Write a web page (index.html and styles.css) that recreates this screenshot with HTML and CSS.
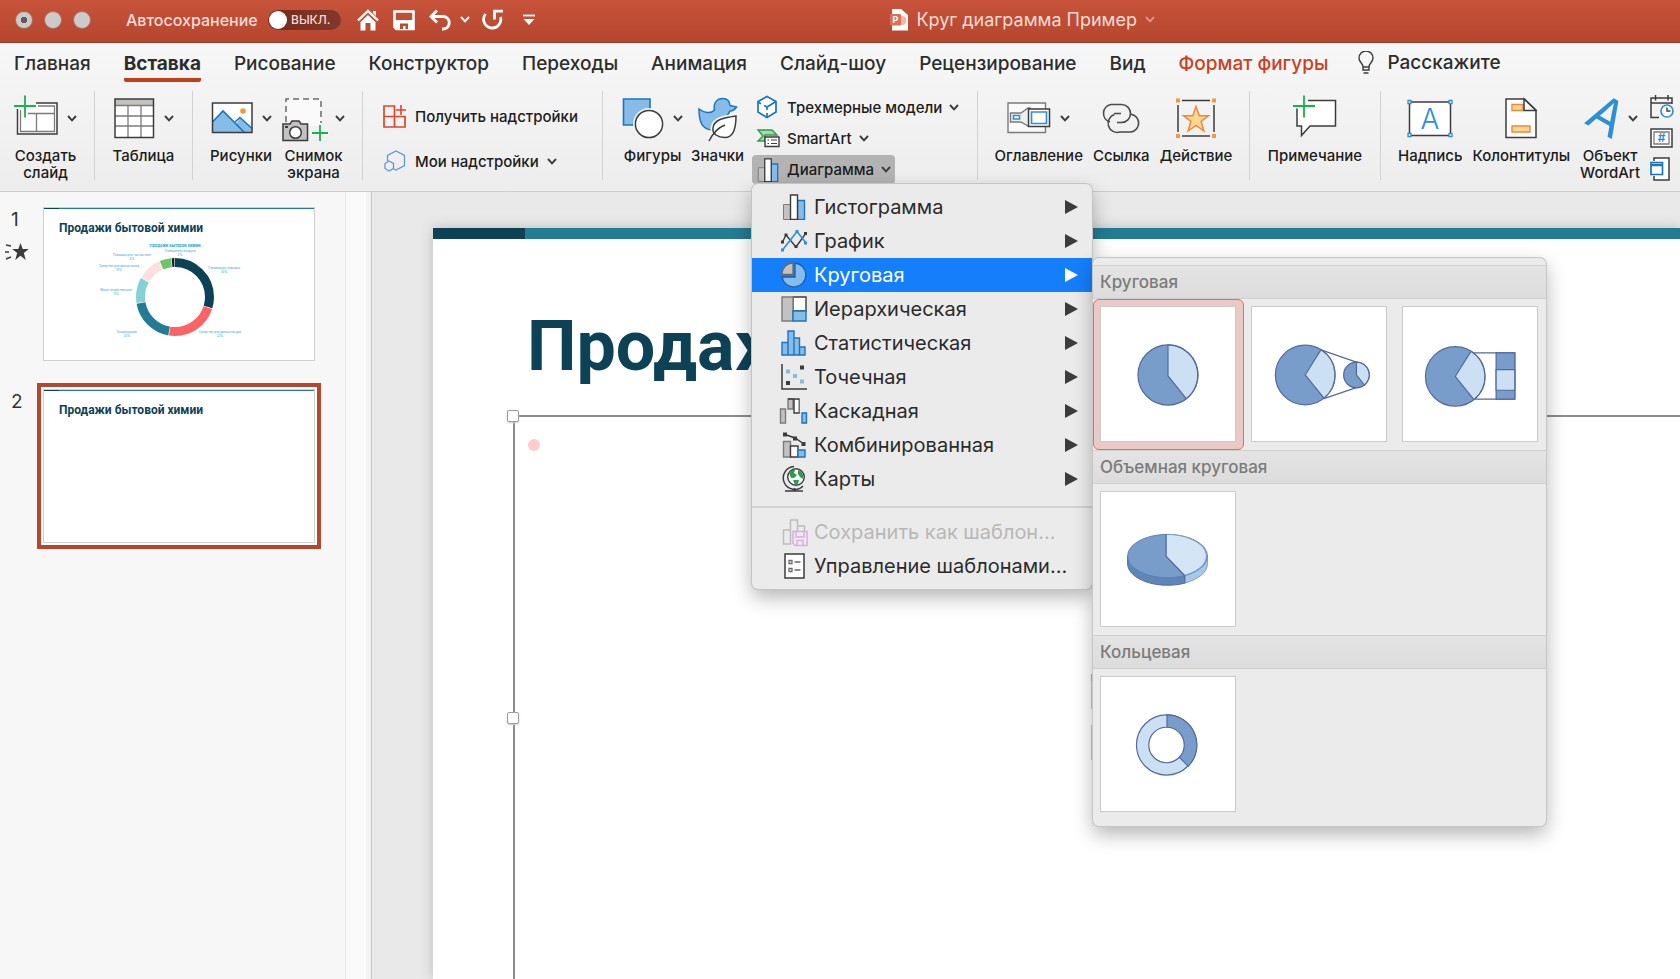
FILE: index.html
```html
<!DOCTYPE html>
<html lang="ru">
<head>
<meta charset="utf-8">
<title>Круг диаграмма Пример</title>
<link rel="stylesheet" href="styles.css">
</head>
<body>
<svg class="defs" aria-hidden="true">
  <symbol id="chev" viewBox="0 0 10 7"><path d="M1 1l4 4.400 4-4.400" fill="none" stroke="currentColor" stroke-width="1.900"/></symbol>
  <symbol id="arrow" viewBox="0 0 13 14"><path d="M0 0l13 7-13 7z" fill="currentColor"/></symbol>
  <symbol id="bars" viewBox="0 0 26 26"><path d="M2.500 10.500h7v15h-7z" fill="#c4c2c0" stroke="#7d7b79"/><path d="M16.500 6.500h7v19h-7z" fill="#86bde8" stroke="#1b74bd" stroke-width="1.400"/><path d="M9.500 1h7v24.500h-7z" fill="#fff" stroke="#3c3c3c" stroke-width="1.400"/></symbol>
</svg>

<header class="titlebar">
  <div class="tools">
    <div class="lights"><button class="light dot" aria-label="Закрыть"></button><button class="light" aria-label="Свернуть"></button><button class="light" aria-label="Развернуть"></button></div>
    <label class="auto" for="autosave">Автосохранение</label>
    <label class="switch"><input type="checkbox" id="autosave"><span>ВЫКЛ.</span></label>
    <div class="quick">
      <button aria-label="Домой"><svg width="22" height="22" viewBox="0 0 22 22"><path d="M1 11.500L11 2l10 9.500" fill="none" stroke="#fff" stroke-width="2.400"/><path d="M16 2h3v5l-3-3zM3.500 13L11 6l7.500 7v8.500h-5V14h-5v7.500h-5z" fill="#fff"/></svg></button>
      <button aria-label="Сохранить"><svg width="22" height="22" viewBox="0 0 22 22"><path d="M1.500 2.500h19v17.500H3.500l-2-2z" fill="none" stroke="#fff" stroke-width="2.600"/><path d="M2 11h18v10H2z" fill="#fff"/><path d="M7 14.500h8V20h-2.500v-3H10v3H7z" fill="#bb4b32"/></svg></button>
      <button aria-label="Отменить"><svg width="22" height="22" viewBox="0 0 22 22"><path d="M8 1.500L2 7.500l6 6M2.500 7.500H14a6 6 0 0 1 0 12.500h-1" fill="none" stroke="#fff" stroke-width="2.800"/></svg></button>
      <button aria-label="Варианты отмены"><svg width="10" height="7"><use href="#chev"/></svg></button>
      <button class="redo" aria-label="Повторить"><svg width="22" height="22" viewBox="0 0 22 22"><path d="M3.500 5A8.600 8.600 0 1 0 18.500 8" fill="none" stroke="#fff" stroke-width="2.800"/><path d="M12.500 10.500V2.200H21" fill="none" stroke="#fff" stroke-width="2.800"/></svg></button>
      <button class="more" aria-label="Настроить панель"><svg width="12" height="12" viewBox="0 0 12 12"><path d="M0 1.500h12" stroke="#fff" stroke-width="1.800"/><path d="M.5 5h11L6 11z" fill="#fff"/></svg></button>
    </div>
  </div>
  <div class="doc">
    <svg width="18" height="22" viewBox="0 0 18 22"><path d="M2 0h9l7 6v15.500H2z" fill="#fff"/><circle cx="12" cy="11.500" r="4.500" fill="#f3b5a5"/><rect y="5" width="11" height="11.500" rx="1" fill="#dd6f58"/><text x="2.500" y="14" class="ppt">P</text></svg>
    <span>Круг диаграмма Пример</span>
    <svg class="dim" width="10" height="7"><use href="#chev"/></svg>
  </div>
</header>

<section class="ribbon">
  <nav class="tabs">
    <a href="#home">Главная</a><a href="#insert" class="on">Вставка</a><a href="#draw">Рисование</a><a href="#design">Конструктор</a><a href="#transitions">Переходы</a><a href="#animation">Анимация</a><a href="#show">Слайд-шоу</a><a href="#review">Рецензирование</a><a href="#view">Вид</a><a href="#shape" class="fmt">Формат фигуры</a>
    <a href="#tell" class="tell"><svg width="16" height="23" viewBox="0 0 16 23"><path d="M5 16c0-4-4-4.500-4-9a7 7 0 0 1 14 0c0 4.500-4 5-4 9zM5 16v3h6v-3M5.500 22h5" fill="none" stroke="#3c3c3c" stroke-width="1.400"/></svg>Расскажите</a>
  </nav>
  <div class="groups">
    <div class="group g1">
      <button class="big"><span class="pic"><svg width="44" height="48" viewBox="0 0 44 48"><path d="M3.500 9h39.500v31H3.500z" fill="#fff"/><path d="M22 9h21v31H3.500V15" fill="none" stroke="#3c3c3c" stroke-width="1.500"/><path d="M24 12h16.500v25.500h-34V16M14 19.500h26.500M22.500 19.500v18" fill="none" stroke="#7d7b79" stroke-width="1.300"/><path d="M11 1.500v22M0 12h22" stroke="#f2f2f2" stroke-width="5"/><path d="M11 1.500v22M0 12h22" stroke="#21ad54" stroke-width="1.800"/></svg><svg class="chev"><use href="#chev"/></svg></span>Создать<br>слайд</button>
    </div>
    <div class="group g2">
      <button class="big"><span class="pic"><svg width="42" height="48" viewBox="0 0 42 48"><path d="M2 5h38.500v38.500H2z" fill="#fff"/><path d="M2 5h38.500v6H2z" fill="#c4c2c0"/><path d="M2 11.500h38.500M2 22h38.500M2 32h38.500M15 11.500v32M28 11.500v32" stroke="#7d7b79" stroke-width="1.300"/><path d="M2 5h38.500v38.500H2z" fill="none" stroke="#3c3c3c" stroke-width="1.500"/></svg><svg class="chev"><use href="#chev"/></svg></span>Таблица</button>
    </div>
    <div class="group g3">
      <button class="big"><span class="pic"><svg width="42" height="48" viewBox="0 0 42 48"><path d="M1.500 9h39.500v29.500H1.500z" fill="#fff"/><circle cx="32" cy="17" r="2.800" fill="#f79742"/><path d="M1.500 28L12 17l13 13 4-6 12 10v4.500H1.500z" fill="#86bde8"/><path d="M1.500 28L12 17l21 21M24 28l5-4.500 12 11" fill="none" stroke="#1b74bd" stroke-width="1.600"/><path d="M1.500 9h39.500v29.500H1.500z" fill="none" stroke="#3c3c3c" stroke-width="1.500"/></svg><svg class="chev"><use href="#chev"/></svg></span>Рисунки</button>
      <button class="big"><span class="pic tight"><svg width="46" height="48" viewBox="0 0 46 48"><path d="M4 5h35v27H4z" fill="#fafafa"/><path d="M4 28V5h35v24" fill="none" stroke="#6b6967" stroke-width="1.500" stroke-dasharray="6 4"/><path d="M1 30h7l2-3h7l2 3h6.500v16.500H1z" fill="#c4c2c0" stroke="#3c3c3c" stroke-width="1.500"/><circle cx="13.500" cy="38.500" r="5.800" fill="#fff" stroke="#3c3c3c" stroke-width="1.500"/><path d="M3 33h3" stroke="#3c3c3c" stroke-width="2"/><path d="M38 31v16M30 39h16" stroke="#21ad54" stroke-width="1.800"/></svg><svg class="chev"><use href="#chev"/></svg></span>Снимок<br>экрана</button>
    </div>
    <div class="group g4">
      <button class="small"><svg width="24" height="24" viewBox="0 0 24 24"><path d="M1 2h10.500v21H1zM1 12.500h21V23H1" fill="none" stroke="#d8482c" stroke-width="1.700"/><path d="M18 1v10M13 6h10" stroke="#d8482c" stroke-width="1.600"/></svg>Получить надстройки</button>
      <button class="small"><svg width="24" height="24" viewBox="0 0 24 24"><path d="M4.500 12V6.500L13 2l8.500 4.500v10L13 21l-3-1.500M6 12l4.500 2.500v5L6 22l-4-2.500v-5z" fill="none" stroke="#5b9bd0" stroke-width="1.300"/></svg>Мои надстройки<svg class="chev"><use href="#chev"/></svg></button>
    </div>
    <div class="group g5">
      <button class="big"><span class="pic"><svg width="42" height="48" viewBox="0 0 42 48"><path d="M1.500 5h26.500v26H1.500z" fill="#86bde8" stroke="#1b74bd" stroke-width="1.600"/><circle cx="27" cy="30" r="16" fill="#f2f2f2"/><circle cx="27" cy="30" r="13.600" fill="#fff" stroke="#3c3c3c" stroke-width="1.500"/></svg><svg class="chev"><use href="#chev"/></svg></span>Фигуры</button>
      <button class="big"><span class="pic"><svg width="40" height="48" viewBox="0 0 40 48"><path d="M1 15c5 4 12 5 15.500 1C15 9 19 4.500 25 4.500c4 0 6.500 2.500 7 7l6.500 1.500c-2 3-4 4-6.500 4l-6 10-11 9C4 36 1 28 1 15z" fill="#86bde8" stroke="#1b74bd" stroke-width="1.500"/><path d="M38 22c0 14-4 21.500-11 21.500S14 40 15 34c1-8 9-10 23-12z" fill="#fff" stroke="#f2f2f2" stroke-width="5"/><path d="M38 22c0 14-4 21.500-11 21.500S14 40 15 34c1-8 9-10 23-12z" fill="#fff" stroke="#3c3c3c" stroke-width="1.500"/><path d="M11 47c3-6 8-13 16-16" fill="none" stroke="#3c3c3c" stroke-width="1.500"/></svg></span>Значки</button>
      <div class="stack">
        <button class="small"><svg width="24" height="24" viewBox="0 0 24 24"><path d="M11 1.500l9 5v10.500l-9 5.500-9-5.500V6.500z" fill="#fff" stroke="#1b74bd" stroke-width="1.700"/><path d="M2 7l3 1.700M8 10.500l3 1.500v3M11 18v4M11 12l9-5.500" fill="none" stroke="#1b74bd" stroke-width="1.700"/></svg>Трехмерные модели<svg class="chev"><use href="#chev"/></svg></button>
        <button class="small"><svg width="24" height="24" viewBox="0 0 24 24"><path d="M2 4h14l5 5H9v6H2l5-5z" fill="#a5dba8" stroke="#2e9a4d" stroke-width="1.400"/><path d="M9 11h14v9.500H9z" fill="#fff" stroke="#3c3c3c" stroke-width="1.400"/><path d="M11.500 14h1.500M15 14h6M11.500 17.500h1.500M15 17.500h6" stroke="#3c3c3c" stroke-width="1.200"/></svg>SmartArt<svg class="chev"><use href="#chev"/></svg></button>
        <button class="small pressed" aria-expanded="true"><svg width="24" height="24"><use href="#bars"/></svg>Диаграмма<svg class="chev"><use href="#chev"/></svg></button>
      </div>
    </div>
    <div class="group g6">
      <button class="big"><span class="pic"><svg width="44" height="48" viewBox="0 0 44 48"><path d="M1 9h37.500v29.500H1z" fill="#fafafa" stroke="#7d7b79" stroke-width="1.400"/><path d="M3.500 19H14l7-5h2v18h-2l-7-4H3.500z" fill="#eee" stroke="#7d7b79" stroke-width="1.400"/><path d="M6.500 21.500h6v3.500h-6z" fill="#fff" stroke="#2b90d4" stroke-width="1.500"/><path d="M21.500 15h21v17.500h-21z" fill="#fff" stroke="#3c3c3c" stroke-width="1.500"/><path d="M24.500 18h15v11.500h-15z" fill="#fff" stroke="#2b90d4" stroke-width="1.700"/></svg><svg class="chev"><use href="#chev"/></svg></span>Оглавление</button>
      <button class="big"><span class="pic"><svg width="42" height="48" viewBox="0 0 42 48"><path d="M10 28a9 9 0 0 1 1-17.500h10.500a9 9 0 0 1 0 18H17M14 19.500h7" fill="none" stroke="#4a4a4a" stroke-width="1.600"/><path d="M14.500 20.500a9 9 0 0 0 5.500 17.500h11a9 9 0 0 0 0-17.800" fill="none" stroke="#4a4a4a" stroke-width="1.600"/></svg></span>Ссылка</button>
      <button class="big"><span class="pic"><svg width="42" height="48" viewBox="0 0 42 48"><path d="M7 6.500h28M7 42h28M3 11v27M39 11v27" stroke="#3c3c3c" stroke-width="1.500"/><path d="M1 4.500h4v4H1zM37 4.500h4v4h-4zM1 40h4v4H1zM37 40h4v4h-4z" fill="#f79742"/><path d="M21 12.500l3.200 9.200h9.300l-7.400 5.800 2.800 9.500L21 31.500 13.100 37l2.800-9.500-7.400-5.800h9.300z" fill="#f8d98e" stroke="#ef8742" stroke-width="1.500"/></svg></span>Действие</button>
    </div>
    <div class="group g7">
      <button class="big"><span class="pic"><svg width="44" height="48" viewBox="0 0 44 48"><path d="M4 6.500h38.500v25.500H17L8.500 41.500V32H4z" fill="#fff"/><path d="M15 6.500h27.500v25.500H17L8.500 41.500V32H4V14" fill="none" stroke="#3c3c3c" stroke-width="1.500"/><path d="M11 1.500v22M0 12h22" stroke="#f2f2f2" stroke-width="5"/><path d="M11 1.500v22M0 12h22" stroke="#21ad54" stroke-width="1.800"/></svg></span>Примечание</button>
    </div>
    <div class="group g8">
      <button class="big"><span class="pic"><svg width="46" height="48" viewBox="0 0 46 48"><path d="M2.500 8h41v33.500h-41z" fill="#fff" stroke="#3c3c3c" stroke-width="1.500"/><g fill="#fff" stroke="#2b90d4" stroke-width="1.300"><path d="M1 6.500h3v3H1zM42 6.500h3v3h-3zM1 39.500h3v3H1zM42 39.500h3v3h-3z"/></g><text x="23" y="35" class="glyph-a">A</text></svg></span>Надпись</button>
      <button class="big"><span class="pic"><svg width="32" height="48" viewBox="0 0 32 48"><path d="M1 5h18.500L31 16v27.500H1z" fill="#fff" stroke="#3c3c3c" stroke-width="1.500"/><path d="M7 10.500h11v6H7zM7 32h18v6H7z" fill="#f8d98e" stroke="#ef8742" stroke-width="1.400"/><path d="M19 5v11.500h12z" fill="#fff" stroke="#3c3c3c" stroke-width="1.500"/></svg></span>Колонтитулы</button>
      <button class="big"><span class="pic art"><svg width="36" height="48" viewBox="0 0 36 48"><text x="15" y="37" class="glyph-art" transform="rotate(30 15 37)">A</text></svg><svg class="chev"><use href="#chev"/></svg></span>Объект<br>WordArt</button>
      <div class="minis">
        <button aria-label="Дата и время"><svg width="24" height="24" viewBox="0 0 24 24"><path d="M9 22.500H1V3h21v6M1 8h21M5.500 0v5.500M18 0v5.500" fill="none" stroke="#3c3c3c" stroke-width="1.500"/><circle cx="17" cy="16" r="6" fill="#fff" stroke="#2b90d4" stroke-width="1.700"/><path d="M17 12.500V16h3.500" fill="none" stroke="#3c3c3c" stroke-width="1.400"/></svg></button>
        <button aria-label="Номер слайда"><svg width="24" height="24" viewBox="0 0 24 24"><path d="M1 3h21v18H1z" fill="#fff" stroke="#3c3c3c" stroke-width="1.500"/><path d="M4 6h15v12H4z" fill="#fff" stroke="#7d7b79" stroke-width="1.300"/><text x="11.500" y="16" class="hash">#</text></svg></button>
        <button aria-label="Объект"><svg width="24" height="24" viewBox="0 0 24 24"><path d="M4 4V1h15v22H4v-4" fill="#fff" stroke="#3c3c3c" stroke-width="1.500"/><path d="M1 5.500h11.500v12H1z" fill="#fff" stroke="#1b74bd" stroke-width="1.700"/><path d="M1 8h11.500" stroke="#1b74bd" stroke-width="2.500"/></svg></button>
      </div>
    </div>
  </div>
</section>

<main class="work">
  <aside class="slides">
    <div class="entry">
      <div class="num">1<svg width="24" height="18" viewBox="0 0 24 18"><path d="M15.500 0l2.200 6h6.100l-5 4 2 7-5.300-4.200L10.200 17l2-7-5-4h6.100z" fill="#3c3c3c"/><path d="M1 2l5 1M0 9h4M1 16l5-2" stroke="#3c3c3c" stroke-width="1.500"/></svg></div>
      <div class="ring"><div class="thumb">
        <div class="thumb-title">Продажи бытовой химии</div>
        <svg class="chart" viewBox="0 0 270 116">
          <g class="donut" transform="rotate(-90 131 54)">
            <circle cx="131" cy="54" r="34.500" pathLength="360" stroke="#0d4256" stroke-dasharray="107 253"/>
            <circle cx="131" cy="54" r="34.500" pathLength="360" stroke="#fd6265" stroke-dasharray="81 279" stroke-dashoffset="-108"/>
            <circle cx="131" cy="54" r="34.500" pathLength="360" stroke="#237b94" stroke-dasharray="70 290" stroke-dashoffset="-190"/>
            <circle cx="131" cy="54" r="34.500" pathLength="360" stroke="#86d1d6" stroke-dasharray="38 322" stroke-dashoffset="-261"/>
            <circle cx="131" cy="54" r="34.500" pathLength="360" stroke="#fddfdf" stroke-dasharray="36 324" stroke-dashoffset="-300"/>
            <circle cx="131" cy="54" r="34.500" pathLength="360" stroke="#6dc567" stroke-dasharray="17 343" stroke-dashoffset="-337"/>
            <circle cx="131" cy="54" r="34.500" pathLength="360" stroke="#0a2533" stroke-dasharray="4 356" stroke-dashoffset="-355"/>
          </g>
          <g class="labels">
            <text x="131" y="4" class="cap">Продажи бытовой химии</text>
            <text x="136" y="9">Освежитель воздуха</text><text x="136" y="13">2%</text>
            <text x="88" y="13">Порошок для чистки плит</text><text x="88" y="17">5%</text>
            <text x="75" y="24">Средство для мытья полов</text><text x="75" y="28">10%</text>
            <text x="72" y="48">Мыло хозяйственное</text><text x="72" y="52">11%</text>
            <text x="83" y="90">Кондиционер</text><text x="83" y="94">20%</text>
            <text x="180" y="26">Стиральный порошок</text><text x="180" y="30">30%</text>
            <text x="176" y="90">Средство для мытья посуды</text><text x="176" y="94">22%</text>
          </g>
        </svg>
      </div></div>
    </div>
    <div class="entry">
      <div class="num">2</div>
      <div class="ring sel"><div class="thumb"><div class="thumb-title">Продажи бытовой химии</div></div></div>
    </div>
  </aside>
  <div class="gutter"></div>
  <div class="canvas">
    <article class="slide">
      <h1>Продажи бытовой химии</h1>
      <div class="placeholder">
        <i class="bullet"></i><i class="handle top"></i><i class="handle mid"></i>
        <i class="ghost"></i>
      </div>
    </article>
  </div>
</main>

<div class="menu" role="menu">
  <button role="menuitem"><svg class="mi"><use href="#bars"/></svg>Гистограмма<svg class="arr"><use href="#arrow"/></svg></button>
  <button role="menuitem"><svg class="mi" viewBox="0 0 26 26"><path d="M1.500 14L5 7l10 12L25 5" fill="none" stroke="#3c3c3c" stroke-width="1.400"/><path d="M1.500 22L16 3.500 25 15" fill="none" stroke="#2b90d4" stroke-width="1.600"/><path d="M0 12.500h3v3H0zM3.500 5.500h3v3h-3zM13.500 17h3v3h-3zM23 4h3v3h-3z" fill="#3c3c3c"/><path d="M0 20.500h3v3H0zM14.500 2h3v3h-3zM23 13.500h3v3h-3z" fill="#2b90d4"/></svg>График<svg class="arr"><use href="#arrow"/></svg></button>
  <button role="menuitem" class="hot"><svg class="mi" viewBox="0 0 26 26"><path d="M14 1a12 12 0 1 1-13 14h13z" fill="#86bde8" stroke="#1b5fa8" stroke-width="1.300"/><path d="M12 1v11.500H1C1 6 6 1 12 1z" fill="#c4c2c0" stroke="#6b6967" stroke-width="1.300"/></svg>Круговая<svg class="arr"><use href="#arrow"/></svg></button>
  <button role="menuitem"><svg class="mi" viewBox="0 0 26 26"><path d="M12 1h13v14H12z" fill="#fff" stroke="#3c3c3c" stroke-width="1.400"/><path d="M1 1h11v24H1z" fill="#c4c2c0" stroke="#7d7b79" stroke-width="1.400"/><path d="M12 15h13v10H12z" fill="#86bde8" stroke="#1b74bd" stroke-width="1.400"/></svg>Иерархическая<svg class="arr"><use href="#arrow"/></svg></button>
  <button role="menuitem"><svg class="mi" viewBox="0 0 26 26"><path d="M1 12.500h6V25H1zM7 1h6v24H7zM13 8h5.500v17H13zM18.500 17H24v8h-5.500z" fill="#86bde8" stroke="#1b74bd" stroke-width="1.400"/></svg>Статистическая<svg class="arr"><use href="#arrow"/></svg></button>
  <button role="menuitem"><svg class="mi" viewBox="0 0 26 26"><path d="M1 0v25h25" fill="none" stroke="#3c3c3c" stroke-width="1.500"/><path d="M19 1.500h4v4h-4zM5 17h4v4H5z" fill="#3c3c3c"/><path d="M5 5.500h4v4H5zM12 10h4v4h-4zM19 15.500h4v4h-4z" fill="#86bde8"/></svg>Точечная<svg class="arr"><use href="#arrow"/></svg></button>
  <button role="menuitem"><svg class="mi" viewBox="0 0 26 26"><path d="M-.5 11H4.500v14H-.500zM7 1h5v10H7z" fill="#c4c2c0" stroke="#7d7b79" stroke-width="1.400"/><path d="M7 1h11v14h-5V1" fill="none" stroke="#3c3c3c" stroke-width="1.400"/><path d="M14 2h3.500v12H14z" fill="#fff"/><path d="M21 15h4.500v10H21z" fill="#86bde8" stroke="#1b74bd" stroke-width="1.400"/></svg>Каскадная<svg class="arr"><use href="#arrow"/></svg></button>
  <button role="menuitem"><svg class="mi" viewBox="0 0 26 26"><path d="M2.500 9.500h7V25h-7z" fill="#c4c2c0" stroke="#7d7b79" stroke-width="1.400"/><path d="M9.500 14h7.500v11H9.500z" fill="#fff" stroke="#3c3c3c" stroke-width="1.400"/><path d="M17 18h7v7h-7z" fill="#86bde8" stroke="#1b74bd" stroke-width="1.400"/><path d="M4 2.500L14 6l9 6" fill="none" stroke="#3c3c3c" stroke-width="1.500"/><path d="M2 .5h4v4H2zM12 4.500h4v4h-4zM20.500 10h4v4h-4z" fill="#3c3c3c"/></svg>Комбинированная<svg class="arr"><use href="#arrow"/></svg></button>
  <button role="menuitem"><svg class="mi" viewBox="0 0 26 26"><circle cx="15" cy="11" r="8.300" fill="#fff" stroke="#3c3c3c" stroke-width="1.400"/><path d="M8 7c2-3 5-4 6-3l-1 3 3 2-3 3-3 0zM17 4c4 1 6 5 5 9l-3-2-2-3zM12 14l6 0-1 4-3 1z" fill="#2e9a4d"/><path d="M13 .5A11.500 11.500 0 1 0 22 20M13.500 22v3M4 25h18" fill="none" stroke="#3c3c3c" stroke-width="1.500"/></svg>Карты<svg class="arr"><use href="#arrow"/></svg></button>
  <hr>
  <button role="menuitem" disabled><svg class="mi" viewBox="0 0 26 26"><path d="M2.500 11h7v14h-7zM9.500 25V1h7v11M16.500 7h7v5" fill="none" stroke="#bdbdbd" stroke-width="1.500"/><path d="M12 12.500h14v14H14l-2-2z" fill="#f3e6f5" stroke="#d5b3dc" stroke-width="1.500"/><path d="M15 13v5h8v-5M16 26v-4.500h6V26" fill="none" stroke="#d5b3dc" stroke-width="1.500"/></svg>Сохранить как шаблон…</button>
  <button role="menuitem"><svg class="mi" viewBox="0 0 26 26"><path d="M4 1h19v24H4z" fill="#fff" stroke="#3c3c3c" stroke-width="1.500"/><path d="M8 7.500h3v3H8zM8 15.500h3v3H8zM13.500 9h6M13.500 17h6" fill="none" stroke="#6b6967" stroke-width="1.300"/></svg>Управление шаблонами…</button>
</div>

<div class="gallery" role="menu" aria-label="Круговая">
  <h2>Круговая</h2>
  <div class="row">
    <button class="tile picked" aria-label="Круговая"><svg viewBox="0 0 136 136"><circle cx="68" cy="69" r="30.500" class="d"/><path d="M68 70V38.500A30.500 30.500 0 0 1 86.500 93z" class="l"/></svg></button>
    <button class="tile" aria-label="Вторичная круговая"><svg viewBox="0 0 136 136"><path d="M70 43.500l36 12.500M73 93l41-14" class="n"/><circle cx="54" cy="69" r="30.300" class="d"/><path d="M54 69l16-25.700A30.300 30.300 0 0 1 73 92.500z" class="l"/><circle cx="106" cy="69" r="13" class="d"/><path d="M106 69V56a13 13 0 0 1 8 23.200z" class="l"/></svg></button>
    <button class="tile" aria-label="Вторичная гистограмма"><svg viewBox="0 0 136 136"><path d="M69 46.500h44.500v47H72" class="n"/><circle cx="53" cy="70.500" r="30.200" class="d"/><path d="M53 70.500l16-25.500A30.200 30.200 0 0 1 72 94z" class="l"/><path d="M94.500 46.500h19v47h-19z" class="d"/><path d="M94.500 63.500h19v21h-19z" class="l"/></svg></button>
  </div>
  <h2>Объемная круговая</h2>
  <div class="row">
    <button class="tile" aria-label="Объемная круговая"><svg viewBox="0 0 136 136"><path d="M27 65v8a40.500 22 0 0 0 58 19.500v-8z" fill="#5c86b8" stroke="#4f6a9c"/><path d="M85 84.500v8c14-4 23-11 23-19.500v-8z" fill="#a7c8e6" stroke="#7d9cc4"/><ellipse cx="67.500" cy="65" rx="40.500" ry="22" fill="#799dcb" stroke="#5f80b2"/><path d="M66 65V43a41 22 0 0 1 19 41.500z" fill="#d4e5f5" stroke="#7d9cc4"/><path d="M66 43v22l19 20v7.500" class="n"/></svg></button>
  </div>
  <h2>Кольцевая</h2>
  <div class="row">
    <button class="tile" aria-label="Кольцевая"><svg viewBox="0 0 136 136"><circle cx="66.500" cy="69" r="30.500" class="l"/><path d="M67 69V38.500A30.500 30.500 0 0 1 88.500 90.500z" class="d"/><circle cx="66.500" cy="69" r="18" fill="#fff" stroke="#52699c" stroke-width="1.200"/></svg></button>
  </div>
</div>
</body>
</html>
```
FILE: styles.css
```css
* { box-sizing: border-box; }
html, body { height: 100%; }
body {
  margin: 0;
  display: flex;
  flex-direction: column;
  overflow: hidden;
  position: relative;
  font-family: Inter, "Noto Sans", sans-serif;
  font-size: 15px;
  color: #262626;
  background: #e9e9e9;
}
button {
  font: inherit;
  color: inherit;
  background: none;
  border: 0;
  padding: 0;
  margin: 0;
}
svg { display: block; flex: none; }
.defs { position: absolute; width: 0; height: 0; }

/* Title bar */
.titlebar {
  display: grid;
  grid-template-columns: 53% 1fr;
  align-items: center;
  height: 43px;
  flex: none;
  padding-bottom: 3px;
  background: linear-gradient(#c7533a, #b5462e);
  border-bottom: 1px solid #9c3c28;
  color: #f8dcd5;
}
.tools { display: flex; align-items: center; padding-left: 15px; }
.lights { display: flex; gap: 11px; }
.light {
  width: 18px;
  height: 18px;
  border-radius: 50%;
  background: #cdcbca;
  border: 1px solid #a8705f;
}
.dot { background: radial-gradient(circle, #5f5b5a 0 3px, #cdcbca 3px); }
.auto { margin-left: 35px; width: 142px; font-size: 16px; font-weight: 500; white-space: nowrap; }
.switch {
  display: flex;
  align-items: center;
  gap: 4px;
  width: 73px;
  height: 20px;
  border-radius: 10px;
  background: linear-gradient(90deg, #74291c, #82392b);
  font-size: 12px;
  font-weight: 500;
}
.switch input {
  appearance: none;
  width: 18px;
  height: 18px;
  margin: 0 0 0 1px;
  border-radius: 50%;
  background: #fff;
}
.quick { display: flex; align-items: center; gap: 14px; margin-left: 16px; color: #fff; }
.quick button:nth-child(4) { margin-left: -5px; }
.redo { margin-left: -2px; }
.more { margin-left: 5px; }
.doc { display: flex; align-items: center; gap: 8px; font-size: 18px; }
.dim { opacity: .5; }
.ppt { font: bold 9px Inter, sans-serif; fill: #fff; }

/* Ribbon */
.ribbon {
  flex: none;
  background: linear-gradient(#f7f7f7, #ededed);
  border-bottom: 1px solid #cdcdcd;
}
.tabs {
  display: flex;
  gap: 33px;
  height: 48px;
  padding-left: 14px;
  font-size: 19px;
  font-weight: 500;
  white-space: nowrap;
}
.tabs a {
  height: 39px;
  line-height: 42px;
  color: #2d2d2d;
  text-decoration: none;
}
.tabs .on { font-weight: 700; border-bottom: 4px solid #c43e1c; border-radius: 2px; }
.tabs .fmt { color: #c9411f; }
.tabs .tell { display: flex; align-items: center; gap: 13px; margin-left: -3px; }
.groups {
  display: grid;
  grid-template-columns: 95px 98px 170px 240px 375px 272px 131px 1fr;
  grid-template-rows: 89px;
  height: 100px;
}
.group { display: flex; gap: 10px; justify-content: center; border-right: 1px solid #d2d2d2; white-space: nowrap; }
.group:last-child { border-right: 0; }
.big {
  align-self: flex-start;
  font-weight: 500;
  line-height: 17px;
  color: #1c1c1c;
  text-align: center;
}
.pic {
  display: flex;
  align-items: center;
  justify-content: center;
  gap: 9px;
  height: 48px;
  margin: 3px 0 5px;
}
.pic.tight { gap: 7px; }
.pic.art svg { overflow: visible; }
.chev { width: 10px; height: 7px; color: #3c3c3c; }
.g1 { justify-content: flex-start; padding-left: 14px; }
.g4 { flex-direction: column; justify-content: flex-start; padding: 13px 0 0 20px; gap: 21px; }
.g5 { justify-content: flex-start; padding-left: 19px; gap: 8px; }
.g8 { justify-content: flex-start; padding-left: 17px; }
.small {
  display: flex;
  align-items: center;
  gap: 8px;
  height: 24px;
  font-weight: 500;
  color: #1c1c1c;
}
.stack { display: flex; flex-direction: column; align-items: flex-start; gap: 7px; padding-top: 4px; }
.stack .small { flex: none; gap: 7px; padding: 0 4px; }
.stack .pressed { height: 29px; margin-top: -2px; background: #b3b3b3; border-radius: 4px; }
.minis { display: flex; flex-direction: column; gap: 7px; padding-top: 4px; }
.glyph-a { font: 300 28px Inter, sans-serif; fill: #2b90d4; text-anchor: middle; }
.glyph-art { font: 400 50px Inter, sans-serif; fill: #2b90d4; text-anchor: middle; }
.hash { font: 600 12px Inter, sans-serif; fill: #2b90d4; text-anchor: middle; }

/* Work area */
.work { flex: 1; min-height: 0; display: grid; grid-template-columns: 345px 27px 1fr; }
.slides {
  display: flex;
  flex-direction: column;
  gap: 16px;
  padding: 9px 24px 0 0;
  background: #f7f7f7;
}
.entry { display: grid; grid-template-columns: 37px 1fr; }
.num { padding: 7px 0 0 5px; font-size: 19px; line-height: 24px; text-indent: 6px; color: #333; }
.num svg { margin-top: 11px; }
.ring { border: 4px solid transparent; padding: 2px; }
.ring.sel { border-color: #b7462e; background: #fff; }
.thumb {
  position: relative;
  height: 154px;
  border: 1px solid #cfcfcf;
  background: linear-gradient(90deg, #0d4256 15px, #237b94 15px) top / 100% 1px no-repeat #fff;
}
.thumb-title {
  padding: 11px 0 0 15px;
  font: bold 12px/19px Roboto, "Liberation Sans", sans-serif;
  color: #0d4256;
}
.chart { width: 100%; margin-top: 5px; }
.donut circle { fill: none; stroke-width: 9; }
.labels { font: 3px Inter, sans-serif; fill: #2ba6d6; text-anchor: middle; }
.labels .cap { font-size: 4px; font-weight: 700; }
.gutter {
  background: linear-gradient(90deg, #fafafa 20px, #f3f3f3 20px);
  border-left: 1px solid #e6e6e6;
  border-right: 1px solid #c6c6c6;
}
.canvas { overflow: hidden; padding: 36px 0 0 61px; background: #e9e9e9; }
.slide {
  position: relative;
  height: 100%;
  background: linear-gradient(90deg, #0d4256 92px, #237b94 92px) top / 100% 11px no-repeat #fff;
  box-shadow: 0 0 12px #bbb;
}
.slide h1 {
  margin: 0;
  padding: 72px 0 0 94px;
  font: bold 70px/92px Roboto, "Liberation Sans", sans-serif;
  color: #0d4256;
  white-space: nowrap;
  overflow: hidden;
}
.placeholder {
  position: absolute;
  left: 80px;
  top: 187px;
  right: 0;
  bottom: 0;
  border: solid #8c8c8c;
  border-width: 2px 0 0 2px;
}
.bullet { position: absolute; left: 13px; top: 22px; width: 12px; height: 12px; border-radius: 50%; background: #ffcbcd; }
.handle {
  position: absolute;
  left: -8px;
  width: 12px;
  height: 12px;
  background: #fff;
  border: 1px solid #9b9b9b;
  border-radius: 2px;
  box-shadow: 0 1px 2px #ccc;
}
.top { top: -7px; }
.mid { top: 295px; }
.ghost {
  position: absolute;
  left: 576px;
  top: 257px;
  width: 40px;
  height: 86px;
  background: linear-gradient(#8db4e2 7px, #c9c9c9 7px 35px, transparent 35px 51px, #c9c9c9 51px);
}

/* Drop-down menu */
.menu {
  position: absolute;
  left: 752px;
  top: 184px;
  width: 340px;
  padding: 6px 0;
  background: #ebebeb;
  border-radius: 6px;
  box-shadow: 0 0 0 1px #c4c4c4, 0 8px 20px rgba(0, 0, 0, .3);
  font-size: 20px;
}
.menu button {
  display: flex;
  align-items: center;
  gap: 7px;
  width: 100%;
  height: 34px;
  padding: 0 14px 0 29px;
  white-space: nowrap;
  color: #2b2b2b;
}
.menu .hot { background: #157efb; color: #fff; }
.menu button:disabled { color: #b8b8b8; }
.mi { width: 26px; height: 26px; overflow: visible; }
.arr { width: 13px; height: 14px; margin-left: auto; color: #3c3c3c; }
.hot .arr { color: #fff; }
.menu hr { height: 2px; margin: 10px 0 7px; border: 0; background: #d2d2d2; }

/* Chart gallery */
.gallery {
  position: absolute;
  left: 1093px;
  top: 258px;
  width: 453px;
  padding: 7px 0 6px;
  background: #ebebeb;
  border-radius: 6px;
  box-shadow: 0 0 0 1px #c6c6c6, 0 8px 20px rgba(0, 0, 0, .3);
}
.gallery h2 {
  height: 34px;
  margin: 0;
  padding-left: 7px;
  border: solid #d0d0d0;
  border-width: 1px 0;
  background: linear-gradient(#e4e4e4, #dcdcdc);
  font-size: 17px;
  font-weight: 500;
  line-height: 33px;
  color: #7b7b7b;
}
.row { display: flex; }
.tile { width: 151px; height: 151px; padding: 6px 7px 7px 6px; border: 1px solid transparent; border-radius: 6px; }
.tile svg { background: #fff; border: 1px solid #cacaca; overflow: hidden; }
.picked { background: #eacac4; border-color: #ee6c53; }
.d { fill: #799dcb; stroke: #52699c; stroke-width: 1.2; }
.l { fill: #cce0f4; stroke: #52699c; stroke-width: 1.2; }
.n { fill: none; stroke: #52699c; stroke-width: 1.2; }
```
